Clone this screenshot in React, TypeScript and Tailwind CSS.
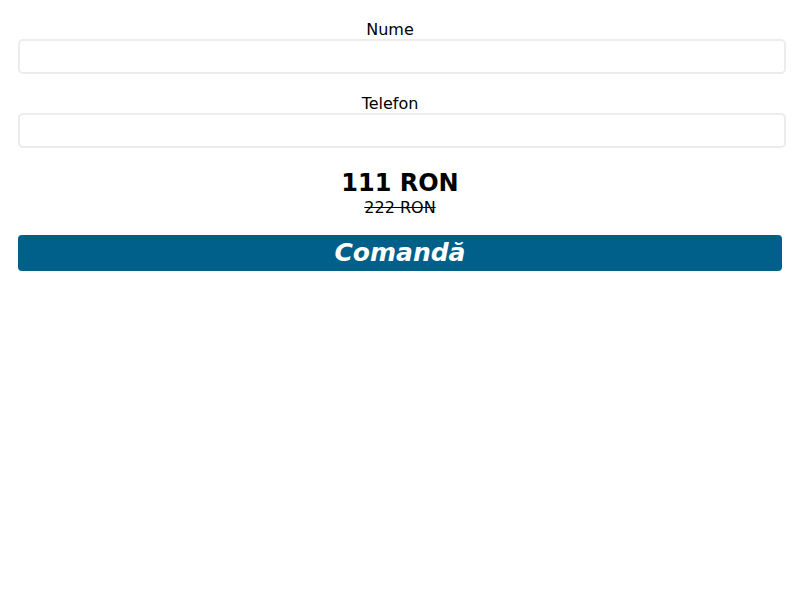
export default function App() {
  const font = { fontFamily: '"DejaVu Sans", Verdana, sans-serif' };
  return (
    <div className="min-h-[600px] bg-white text-black" style={font}>
      <form className="flex flex-col pt-[20px]" onSubmit={(e) => e.preventDefault()}>
        <label className="block pr-[20px] text-center text-[16px] leading-[19px]">Nume</label>
        <input
          type="text"
          className="ml-[18px] mr-[14px] h-[35px] rounded-[5px] border-2 border-[#ececec] bg-white px-2 outline-none"
        />
        <label className="mt-[20px] block pr-[20px] text-center text-[16px] leading-[19px]">Telefon</label>
        <input
          type="tel"
          className="ml-[18px] mr-[14px] h-[35px] rounded-[5px] border-2 border-[#ececec] bg-white px-2 outline-none"
        />
        <div className="mt-[21px] text-center text-[24px] font-bold leading-[29px]">111 RON</div>
        <div className="mt-[1px] text-center text-[16px] leading-[18px] line-through">222 RON</div>
        <button
          type="submit"
          className="ml-[18px] mr-[18px] mt-[18px] h-[36px] rounded-[4px] bg-[#006089] text-[25px] font-bold italic leading-[36px] text-white"
          style={font}
        >
          Comandă
        </button>
      </form>
    </div>
  );
}
